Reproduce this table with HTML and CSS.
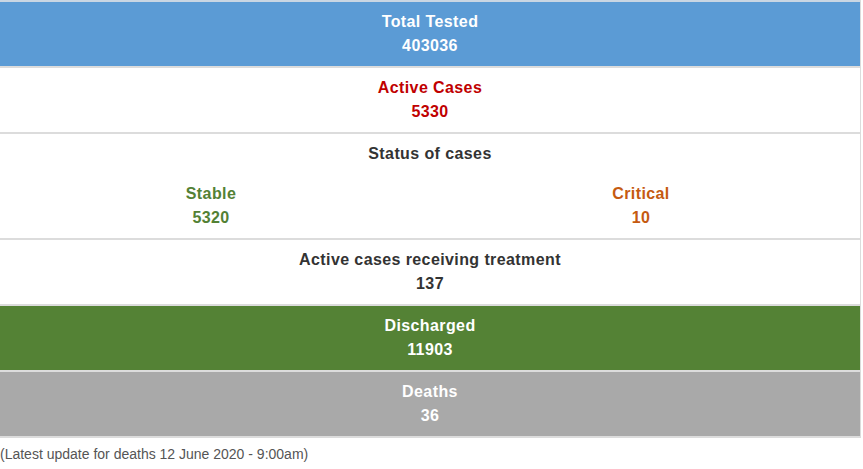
FILE: index.html
```html
<!DOCTYPE html>
<html>
<head>
<meta charset="utf-8">
<link rel="stylesheet" href="styles.css">
</head>
<body>
<div class="stats">
  <div class="row tested">
    <div class="label">Total Tested</div>
    <div class="value">403036</div>
  </div>
  <div class="row active">
    <div class="label">Active Cases</div>
    <div class="value">5330</div>
  </div>
  <div class="row status">
    <div class="label">Status of cases</div>
    <div class="split">
      <div class="col stable">
        <div class="label">Stable</div>
        <div class="value">5320</div>
      </div>
      <div class="col critical">
        <div class="label">Critical</div>
        <div class="value">10</div>
      </div>
    </div>
  </div>
  <div class="row treatment">
    <div class="label">Active cases receiving treatment</div>
    <div class="value">137</div>
  </div>
  <div class="row discharged">
    <div class="label">Discharged</div>
    <div class="value">11903</div>
  </div>
  <div class="row deaths">
    <div class="label">Deaths</div>
    <div class="value">36</div>
  </div>
</div>
<p class="note">(Latest update for deaths 12 June 2020 - 9:00am)</p>
</body>
</html>
```
FILE: styles.css
```css
html, body {
  margin: 0;
  padding: 0;
  background: #fff;
}
body {
  font-family: "Liberation Sans", Arial, sans-serif;
}
.stats {
  width: 860px;
  border-right: 1px solid #dcdcdc;
  border-bottom: 2px solid #dcdcdc;
}
.row {
  border-top: 2px solid #dcdcdc;
  padding: 8px 0 8px;
  height: 48px;
  text-align: center;
  font-weight: bold;
  font-size: 16px;
  line-height: 24px;
  letter-spacing: 0.4px;
  color: #333;
}
.tested {
  background: #5b9bd5;
  color: #fff;
  border-top-color: #c9d6e3;
}
.active {
  color: #c00000;
}
.status {
  height: 88px;
}
.split {
  display: grid;
  grid-template-columns: 1fr 1fr;
  margin: 16px 4px 0 -4px;
}
.stable {
  color: #538135;
}
.critical {
  color: #c55a11;
}
.discharged {
  background: #548235;
  color: #fff;
}
.deaths {
  background: #a9a9a9;
  color: #fff;
}
.note {
  margin: 7px 0 0;
  font-size: 14px;
  line-height: 18px;
  color: #555;
}
```
